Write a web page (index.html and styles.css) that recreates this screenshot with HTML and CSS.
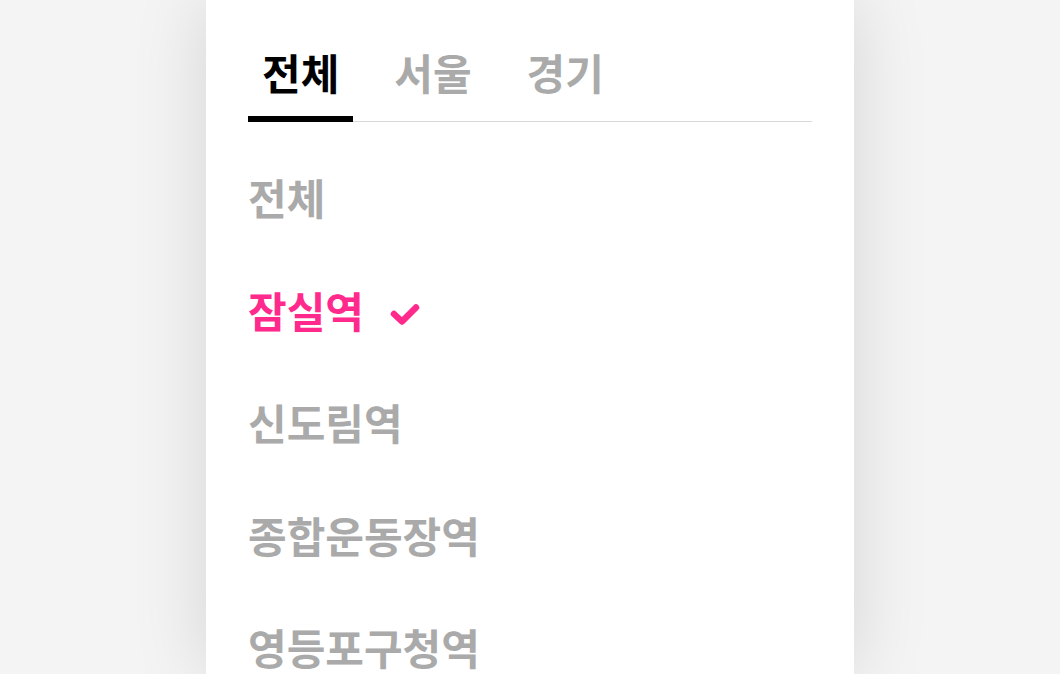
FILE: index.html
```html
<!DOCTYPE html>
<html lang="ko">
<head>
<meta charset="utf-8">
<link rel="stylesheet" href="styles.css">
</head>
<body>
<div class="panel">
  <nav class="tabs">
    <div class="tab active">전체</div>
    <div class="tab">서울</div>
    <div class="tab">경기</div>
  </nav>
  <ul class="list">
    <li class="item">전체</li>
    <li class="item selected">잠실역
      <svg class="check" width="32" height="26" viewBox="0 0 32 26"><path d="M5 12 L13 19.5 L27 5.5" fill="none" stroke="#ff2a8c" stroke-width="6.5" stroke-linecap="round" stroke-linejoin="round"/></svg>
    </li>
    <li class="item">신도림역</li>
    <li class="item">종합운동장역</li>
    <li class="item">영등포구청역</li>
  </ul>
</div>
</body>
</html>
```
FILE: styles.css
```css
html, body {
  margin: 0;
  padding: 0;
  background: #f4f4f4;
  height: 100%;
  overflow: hidden;
}
body {
  font-family: "Noto Sans CJK KR", "Noto Sans", sans-serif;
  display: flex;
  justify-content: center;
}
.panel {
  width: 648px;
  background: #fff;
  box-shadow: 0 0 70px rgba(0, 0, 0, 0.13);
  padding: 0 42px;
  box-sizing: border-box;
  height: 100%;
}
.tabs {
  display: flex;
  gap: 27px;
  padding-top: 37px;
  border-bottom: 1px solid #d9d9d9;
}
.tab {
  font-size: 42px;
  font-weight: 700;
  color: #aaaaaa;
  line-height: 70px;
  padding: 0 14px 9px;
  margin-bottom: -1px;
  border-bottom: 6px solid transparent;
}
.tab.active {
  color: #000;
  border-bottom-color: #000;
}
.list {
  list-style: none;
  margin: 0;
  padding: 40px 0 0;
}
.item {
  font-size: 42px;
  font-weight: 700;
  color: #aaaaaa;
  height: 112.5px;
  line-height: 70px;
  display: flex;
  align-items: flex-start;
}
.item.selected {
  color: #ff2a8c;
}
.check {
  margin-left: 25px;
  margin-top: 27px;
}
```
